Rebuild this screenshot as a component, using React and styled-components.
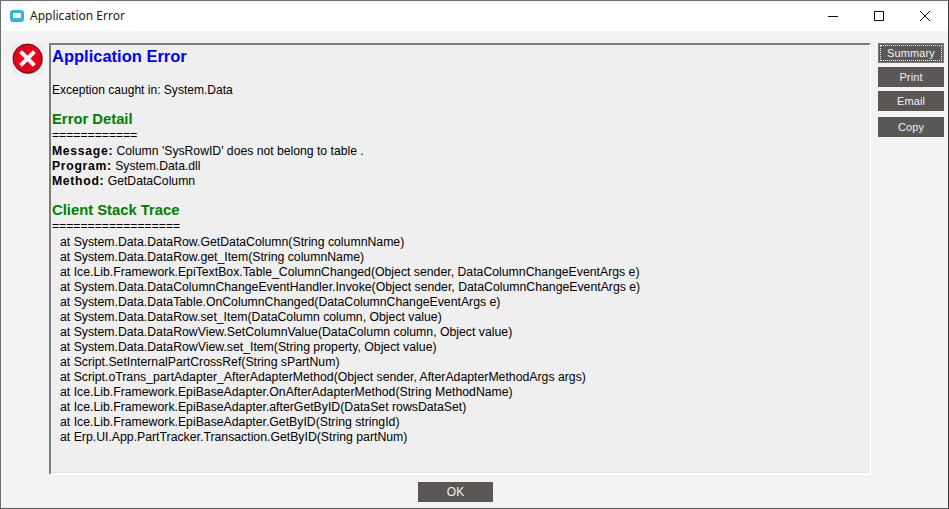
import React from "react";
import styled, { createGlobalStyle } from "styled-components";

const Global = createGlobalStyle`
  html, body { margin: 0; padding: 0; background: #f3f3f5; }
  * { box-sizing: border-box; }
`;

const Window = styled.div`
  width: 949px; height: 509px; display: flex; flex-direction: column;
  background: #f3f3f5; overflow: hidden;
  border: 1px solid #6e6e6e; border-right-color: #3c3c3c; border-bottom-color: #555;
  font-family: "Liberation Sans", Arial, sans-serif;
`;
const TitleBar = styled.div`
  height: 30px; flex: none; background: #fff; display: flex; align-items: center; padding-left: 9px;
`;
const AppIcon = styled.svg`width: 14px; height: 12px; flex: none; margin-top: -1px;`;
const TitleText = styled.div`
  margin: -2px 0 0 6px; font: 12px "Noto Sans", "Open Sans", sans-serif; color: #1a1a1a; flex: 1;
`;
const Controls = styled.div`display: flex; height: 30px;`;
const Ctl = styled.div`width: 46px; display: flex; align-items: center; justify-content: center; padding-bottom: 1px; svg { width: 10px; height: 10px; display:block; }`;

const Body = styled.div`flex: 1; display: flex; min-height: 0;`;
const Main = styled.div`flex: 1; display: flex; flex-direction: column; min-width: 0;`;
const Row = styled.div`display: flex; padding-top: 12px; height: 444px;`;
const IconCol = styled.div`width: 48px; flex: none; padding: 0 0 0 11px;`;
const Pane = styled.div`
  width: 822px; height: 432px; flex: none; background: #efefef;
  border-top: 2px solid #7b7b7b; border-left: 2px solid #7b7b7b;
  border-right: 2px solid #fff; border-bottom: 2px solid #fff;
  box-shadow: inset -1px -1px 0 #e2e2e2;
  padding: 1px 0 0 1px; color: #000; font-size: 12.2px; line-height: 15px; white-space: pre;
`;
const H1 = styled.div`color: #0000ff; font-size: 16.5px; font-weight: 700; line-height: 20px; height: 21px;`;
const H2 = styled.div`color: #008000; font-size: 14.8px; font-weight: 700; line-height: 16px; height: ${p => p.$h}px;`;
const Line = styled.div`height: ${p => p.$h || 15}px; font-size: ${p => p.$fs || 12.2}px;`;
const Label = styled.b`letter-spacing: .7px;`;
const TraceLine = styled.div`height: 15px; padding-left: 8px; font-size: 12.28px;`;
const Gap = styled.div`height: ${p => p.$h}px;`;
const Side = styled.div`width: 79px; flex: none; display: flex; flex-direction: column; padding: 0 0 0 7px;`;
const Btn = styled.div`
  width: 66px; height: 20px; margin-bottom: ${p => p.$mb}px; flex: none;
  background: #5a5754; color: #eef2ff; font-size: 11px;
  display: flex; align-items: center; justify-content: center; letter-spacing: .1px;
  ${p => p.$active ? "outline: 1px dotted #f4f4f4; outline-offset: -3px; border: 1px solid #7a7a7a;" : ""}
`;
const Footer = styled.div`flex: 1; display: flex; padding: 7px 0 0 0;`;
const OkBtn = styled(Btn)`width: 75px; margin: 0; font-size: 12px;`;
const FooterInner = styled.div`width: 947px; display: flex; padding-left: 417px;`;

const trace = [
  "at System.Data.DataRow.GetDataColumn(String columnName)",
  "at System.Data.DataRow.get_Item(String columnName)",
  "at Ice.Lib.Framework.EpiTextBox.Table_ColumnChanged(Object sender, DataColumnChangeEventArgs e)",
  "at System.Data.DataColumnChangeEventHandler.Invoke(Object sender, DataColumnChangeEventArgs e)",
  "at System.Data.DataTable.OnColumnChanged(DataColumnChangeEventArgs e)",
  "at System.Data.DataRow.set_Item(DataColumn column, Object value)",
  "at System.Data.DataRowView.SetColumnValue(DataColumn column, Object value)",
  "at System.Data.DataRowView.set_Item(String property, Object value)",
  "at Script.SetInternalPartCrossRef(String sPartNum)",
  "at Script.oTrans_partAdapter_AfterAdapterMethod(Object sender, AfterAdapterMethodArgs args)",
  "at Ice.Lib.Framework.EpiBaseAdapter.OnAfterAdapterMethod(String MethodName)",
  "at Ice.Lib.Framework.EpiBaseAdapter.afterGetByID(DataSet rowsDataSet)",
  "at Ice.Lib.Framework.EpiBaseAdapter.GetByID(String stringId)",
  "at Erp.UI.App.PartTracker.Transaction.GetByID(String partNum)",
];

export default function App() {
  return (
    <Window>
      <Global />
      <TitleBar>
        <AppIcon viewBox="0 0 14 12"><rect x="0" y="0" width="14" height="12" rx="3" fill="#2fb4e6"/><rect x="3" y="3" width="8" height="5" rx="1" fill="#fff"/></AppIcon>
        <TitleText>Application Error</TitleText>
        <Controls>
          <Ctl><svg viewBox="0 0 10 10"><path d="M0 5.5h10" stroke="#111" strokeWidth="1"/></svg></Ctl>
          <Ctl><svg viewBox="0 0 10 10"><rect x=".5" y=".5" width="9" height="9" fill="none" stroke="#111"/></svg></Ctl>
          <Ctl><svg viewBox="0 0 10 10"><path d="M0 0l10 10M10 0L0 10" stroke="#111" strokeWidth="1"/></svg></Ctl>
        </Controls>
      </TitleBar>
      <Body>
        <Main>
          <Row>
            <IconCol>
              <svg width="32" height="32" viewBox="0 0 32 32">
                <rect width="32" height="32" fill="#ececec"/>
                <circle cx="16.5" cy="16.5" r="14.5" fill="#8a8a8a"/>
                <circle cx="15.5" cy="15.5" r="14.5" fill="#e8001c" stroke="#5a0a10" strokeWidth="1"/>
                <path d="M10 10l11 11M21 10L10 21" stroke="#fff" strokeWidth="4" strokeLinecap="square"/>
              </svg>
            </IconCol>
            <Pane>
              <H1>Application Error</H1>
              <Gap $h={16} />
              <Line $fs={12.05}>Exception caught in: System.Data</Line>
              <Gap $h={13} />
              <H2 $h={17}>Error Detail</H2>
              <Line $h={16}>============</Line>
              <Line><Label>Message:</Label> Column 'SysRowID' does not belong to table .</Line>
              <Line><Label>Program:</Label> System.Data.dll</Line>
              <Line><Label>Method:</Label> GetDataColumn</Line>
              <Gap $h={13} />
              <H2 $h={17}>Client Stack Trace</H2>
              <Line $h={16}>==================</Line>
              {trace.map(t => <TraceLine key={t}>{t}</TraceLine>)}
            </Pane>
            <Side>
              <Btn $active $mb={4}>Summary</Btn>
              <Btn $mb={4}>Print</Btn>
              <Btn $mb={6}>Email</Btn>
              <Btn $mb={0}>Copy</Btn>
            </Side>
          </Row>
          <Footer>
            <FooterInner><OkBtn>OK</OkBtn></FooterInner>
          </Footer>
        </Main>
      </Body>
    </Window>
  );
}
